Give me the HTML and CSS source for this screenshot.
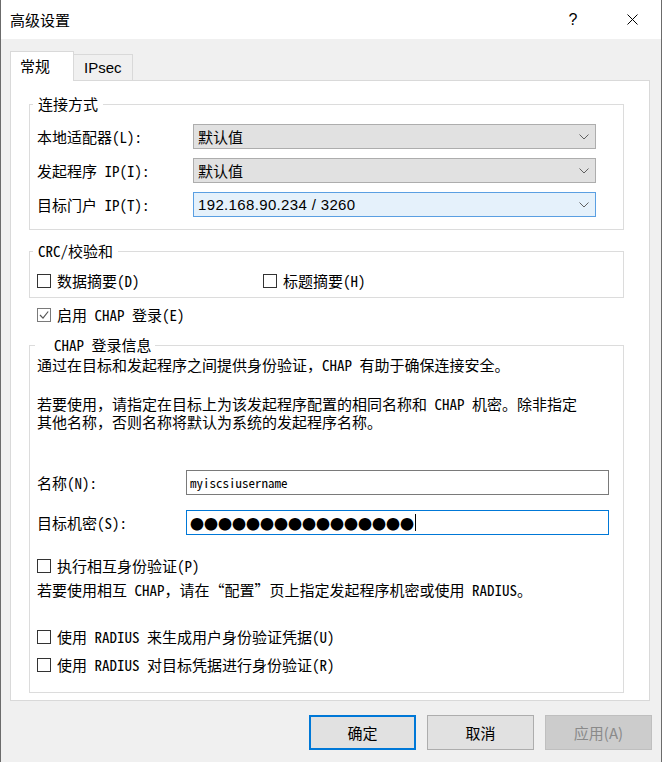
FILE: index.html
```html
<!DOCTYPE html>
<html lang="zh-CN">
<head>
<meta charset="utf-8">
<title>高级设置</title>
<link rel="stylesheet" href="styles.css">
</head>
<body>
<div class="window">
  <div class="titlebar">
    <span class="title">高级设置</span>
    <span class="help">?</span>
    <span class="close"><svg width="11" height="11" viewBox="0 0 11 11"><path d="M0.5 0.5L10.5 10.5M10.5 0.5L0.5 10.5" stroke="#000" stroke-width="1" fill="none"/></svg></span>
  </div>
  <div class="client">
    <div class="tabs">
      <div class="tab active">常规</div>
      <div class="tab">IPsec</div>
    </div>
    <div class="panel">
      <fieldset class="group g-conn">
        <legend>连接方式</legend>
        <div class="form-row">
          <span class="lbl">本地适配器(L):</span>
          <div class="combo"><span>默认值</span><svg width="10" height="6" viewBox="0 0 10 6"><polyline points="0.5,0.5 5,5 9.5,0.5" fill="none" stroke="#606060" stroke-width="1"/></svg></div>
        </div>
        <div class="form-row">
          <span class="lbl">发起程序 IP(I):</span>
          <div class="combo"><span>默认值</span><svg width="10" height="6" viewBox="0 0 10 6"><polyline points="0.5,0.5 5,5 9.5,0.5" fill="none" stroke="#606060" stroke-width="1"/></svg></div>
        </div>
        <div class="form-row">
          <span class="lbl">目标门户 IP(T):</span>
          <div class="combo focus"><span class="ip">192.168.90.234 / 3260</span><svg width="10" height="6" viewBox="0 0 10 6"><polyline points="0.5,0.5 5,5 9.5,0.5" fill="none" stroke="#606060" stroke-width="1"/></svg></div>
        </div>
      </fieldset>

      <fieldset class="group g-crc">
        <legend>CRC/校验和</legend>
        <div class="crc-row">
          <div class="check"><span class="box"></span>数据摘要(D)</div>
          <div class="check"><span class="box"></span>标题摘要(H)</div>
        </div>
      </fieldset>

      <div class="check chap-enable"><span class="box checked"><svg width="12" height="12" viewBox="0 0 12 12"><polyline points="2,6 5,9.2 10.2,2.5" fill="none" stroke="#555" stroke-width="1.2"/></svg></span>启用 CHAP 登录(E)</div>

      <fieldset class="group g-chap">
        <legend>CHAP 登录信息</legend>
        <p class="intro">通过在目标和发起程序之间提供身份验证，CHAP 有助于确保连接安全。</p>
        <p class="usage">若要使用，请指定在目标上为该发起程序配置的相同名称和 CHAP 机密。除非指定<br>其他名称，否则名称将默认为系统的发起程序名称。</p>
        <div class="form-row name-row">
          <span class="lbl narrow">名称(N):</span>
          <div class="textbox"><span>myiscsiusername</span></div>
        </div>
        <div class="form-row secret-row">
          <span class="lbl narrow">目标机密(S):</span>
          <div class="textbox focus"><span class="dots">●●●●●●●●●●●●●●●●</span><span class="caret"></span></div>
        </div>
        <div class="check mutual"><span class="box"></span>执行相互身份验证(P)</div>
        <p class="mutual-note">若要使用相互 CHAP，请在“配置”页上指定发起程序机密或使用 RADIUS。</p>
        <div class="check radius1"><span class="box"></span>使用 RADIUS 来生成用户身份验证凭据(U)</div>
        <div class="check radius2"><span class="box"></span>使用 RADIUS 对目标凭据进行身份验证(R)</div>
      </fieldset>
    </div>
    <div class="buttons">
      <button class="btn default">确定</button>
      <button class="btn">取消</button>
      <button class="btn disabled">应用(A)</button>
    </div>
  </div>
</div>
</body>
</html>
```

FILE: styles.css
```css
html, body {
  margin: 0;
  padding: 0;
}
body {
  width: 662px;
  height: 762px;
  overflow: hidden;
  font-family: "Noto Sans Mono CJK SC", "Noto Sans CJK SC", sans-serif;
  font-size: 15px;
  color: #000;
}
.window {
  width: 662px;
  height: 762px;
  box-sizing: border-box;
  border-left: 1px solid #6b6b6b;
  border-right: 1px solid #6b6b6b;
  display: flex;
  flex-direction: column;
  background: #f0f0f0;
}
.titlebar {
  flex: none;
  height: 39px;
  background: #fff;
  display: flex;
  align-items: center;
  padding-left: 9px;
  padding-right: 23px;
}
.title {
  flex: 1;
  font-family: "Noto Sans CJK SC", sans-serif;
  font-size: 15px;
}
.help {
  width: 10px;
  text-align: center;
  font-family: "Liberation Sans", sans-serif;
  font-size: 16px;
  margin-right: 49px;
}
.close {
  display: flex;
  width: 11px;
  height: 11px;
}
.client {
  flex: 1;
  display: flex;
  flex-direction: column;
  padding: 12px 11px 0 9px;
}
.tabs {
  display: flex;
  align-items: flex-end;
  height: 30px;
  margin-bottom: -1px;
  position: relative;
  z-index: 1;
}
.tab {
  box-sizing: border-box;
  height: 27px;
  width: 59px;
  border: 1px solid #d9d9d9;
  border-left: none;
  background: #f0f0f0;
  padding-left: 10px;
  font-family: "Liberation Sans", "Noto Sans CJK SC", sans-serif;
  font-size: 15px;
  line-height: 26px;
}
.tab.active {
  height: 30px;
  width: 64px;
  border-left: 1px solid #d9d9d9;
  border-bottom: none;
  background: #fff;
  padding-left: 9px;
  font-family: "Noto Sans CJK SC", sans-serif;
  line-height: 28px;
}
.panel {
  width: 640px;
  height: 621px;
  box-sizing: border-box;
  border: 1px solid #d9d9d9;
  background: #fff;
  padding: 14px 25px 0 18px;
}
.group {
  margin: 0;
  min-width: 0;
  border: 1px solid #dcdcdc;
}
.group legend {
  font-size: 15px;
  line-height: 18px;
  padding: 0 5px;
  margin-left: -4px;
}
.g-conn {
  padding: 11px 27px 12px 7px;
}
.form-row {
  display: flex;
  align-items: center;
  height: 25px;
}
.form-row + .form-row {
  margin-top: 9px;
}
.lbl {
  flex: none;
  width: 156px;
}
.lbl.narrow {
  width: 149px;
}
.combo {
  box-sizing: border-box;
  width: 403px;
  height: 25px;
  border: 1px solid #adadad;
  background: #e1e1e1;
  display: flex;
  align-items: center;
  justify-content: space-between;
  padding: 0 6px 0 4px;
}
.combo.focus {
  border-color: #5a9fe2;
  background: #e5f1fb;
}
.combo .ip {
  font-family: "Liberation Sans", sans-serif;
  font-size: 15px;
  letter-spacing: 0.35px;
}
.g-crc {
  margin-top: 12px;
  padding: 12px 7px 7px 7px;
}
.crc-row {
  display: flex;
}
.crc-row .check:first-child {
  width: 226px;
}
.check {
  display: flex;
  align-items: center;
  height: 18px;
  line-height: 18px;
}
.box {
  flex: none;
  box-sizing: border-box;
  width: 14px;
  height: 14px;
  border: 1px solid #333;
  background: #fff;
  margin-right: 6px;
  display: flex;
  align-items: center;
  justify-content: center;
}
.box.checked {
  border-color: #7a7a7a;
}
.chap-enable {
  margin: 8px 0 0 8px;
}
.g-chap {
  margin-top: 12px;
  padding: 2px 14px 18px 7px;
}
.g-chap legend {
  padding: 0 3px 0 19px;
  margin-left: -2px;
}
.g-chap p {
  margin: 0;
}
.intro {
  line-height: 18px;
}
.g-chap .usage {
  margin-top: 21px;
  line-height: 18px;
}
.name-row {
  margin-top: 39px;
}
.form-row.secret-row {
  margin-top: 15px;
}
.textbox {
  box-sizing: border-box;
  width: 423px;
  height: 25px;
  border: 1px solid #7a7a7a;
  background: #fff;
  display: flex;
  align-items: center;
  padding-left: 3px;
  font-size: 13px;
}
.textbox.focus {
  border-color: #0078d7;
}
.dots {
  font-family: "Noto Sans CJK SC", sans-serif;
  font-size: 14px;
  line-height: 14px;
}
.caret {
  width: 1px;
  height: 17px;
  background: #000;
  margin-left: 1px;
}
.mutual {
  margin-top: 22px;
}
.g-chap .mutual-note {
  margin-top: 6px;
  line-height: 18px;
}
.radius1 {
  margin-top: 29px;
}
.radius2 {
  margin-top: 10px;
}
.buttons {
  display: flex;
  justify-content: flex-end;
  gap: 11px;
  margin-top: 14px;
  margin-right: -2px;
}
.btn {
  box-sizing: border-box;
  width: 107px;
  height: 35px;
  border: 1px solid #adadad;
  background: #e1e1e1;
  font-family: "Noto Sans CJK SC", sans-serif;
  font-size: 15px;
  color: #000;
  padding: 0;
  margin: 0;
}
.btn.default {
  border: 2px solid #0078d7;
}
.btn.disabled {
  background: #cccccc;
  border-color: #bfbfbf;
  color: #8a8a8a;
}
```
